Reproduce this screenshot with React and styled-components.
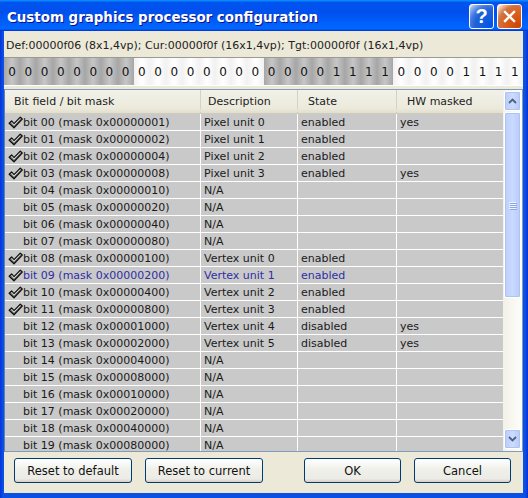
import React from 'react';
import styled, { createGlobalStyle } from 'styled-components';

const GlobalStyle = createGlobalStyle`
  html, body { margin: 0; padding: 0; background: #fff; }
  body { font-family: "DejaVu Sans", Tahoma, sans-serif; font-size: 11px; color: #111; }
`;

const Window = styled.div`
  width: 528px;
  height: 498px;
  display: flex;
  flex-direction: column;
  background: #0a45da;
`;

const TitleBar = styled.div`
  height: 31px;
  flex-shrink: 0;
  display: flex;
  align-items: center;
  padding: 1px 6px 0 7px;
  box-sizing: border-box;
  background: linear-gradient(180deg, #0997ff, #0053ee 8%, #0050ee 40%, #0066ff 88%, #0066ff 93%, #005bff 95%, #003dd7 96%, #003dd7);
`;

const Title = styled.div`
  flex: 1;
  padding-top: 2px;
  color: #fff;
  font-family: "DejaVu Sans", sans-serif;
  font-weight: bold;
  font-size: 13.4px;
  text-shadow: 1px 1px #0f1089;
`;

const TitleButton = styled.div`
  width: 25px;
  height: 25px;
  box-sizing: border-box;
  margin-left: 3px;
  border: 1px solid #fff;
  border-radius: 3px;
  display: flex;
  align-items: center;
  justify-content: center;
  color: #fff;
  font-family: "Liberation Sans", Arial, sans-serif;
  font-weight: bold;
  font-size: 20px;
  background: ${p => p.$close
    ? 'radial-gradient(circle at 90% 90%, #cc4600 0%, #dc6527 55%, #cd7546 70%, #ffccb2 90%, #fff 100%)'
    : 'radial-gradient(circle at 90% 90%, #0054e9 0%, #2263d5 55%, #4479e4 70%, #a3bbec 90%, #fff 100%)'};
`;

const Frame = styled.div`
  flex: 1;
  display: flex;
  padding: 0 5px 5px 4px;
  min-height: 0;
  background: linear-gradient(to right, #0831d9, #0b52e4 3px, #0b52e4 calc(100% - 3px), #0831d9);
`;

const Body = styled.div`
  flex: 1;
  display: flex;
  flex-direction: column;
  background: #ece9d8;
  min-width: 0;
`;

const InfoBar = styled.div`
  height: 26px;
  flex-shrink: 0;
  display: flex;
  align-items: center;
  padding: 2px 0 0 2px;
  box-sizing: border-box;
  color: #222;
  white-space: nowrap;
`;

const Strip = styled.div`
  display: grid;
  grid-template-columns: repeat(32, 1fr);
  height: 27px;
  flex-shrink: 0;
  border-top: 1px solid #9c9a90;
  border-bottom: 1px solid #fff;
  margin-bottom: 3px;
`;

const BitCell = styled.div`
  display: flex;
  align-items: center;
  justify-content: center;
  font-size: 12px;
  color: #111;
  background: ${p => p.$dark
    ? 'linear-gradient(to right, #a6a6a6, #c6c6c6 50%, #a6a6a6)'
    : 'linear-gradient(to right, #f1f1f1, #ffffff 50%, #f1f1f1)'};
`;

const List = styled.div`
  flex: 1;
  min-height: 0;
  display: flex;
  border: 1px solid #7f9db9;
  border-left-color: #5f7fb8;
  background: #fff;
`;

const ListMain = styled.div`
  flex: 1;
  min-width: 0;
  overflow: hidden;
  display: flex;
  flex-direction: column;
`;

const cols = '195px 96px 98px 1fr';

const Header = styled.div`
  display: grid;
  grid-template-columns: ${cols};
  column-gap: 1px;
  height: 24px;
  flex-shrink: 0;
  box-sizing: border-box;
  background: #d6d2c2;
  border-bottom: 2px solid #d0ccbc;
  box-shadow: inset 0 -3px #e2ded0;
`;

const HeaderCell = styled.div`
  background: linear-gradient(#f2f1ea, #ebeadb 80%, #e2ded0);
  padding-left: ${p => p.$pad}px;
  line-height: 23px;
  color: #222;
  white-space: nowrap;
`;

const Row = styled.div`
  display: grid;
  grid-template-columns: ${cols};
  column-gap: 1px;
  height: 16px;
  margin-bottom: 1px;
  flex-shrink: 0;
`;

const Cell = styled.div`
  display: flex;
  align-items: center;
  padding: 1px 0 0 3px;
  box-sizing: border-box;
  background: #c9c9c9;
  color: ${p => (p.$blue ? '#2e2ea6' : '#1a1a1a')};
  white-space: nowrap;
  overflow: hidden;
`;

const CheckSlot = styled.span`
  width: 15px;
  height: 15px;
  flex-shrink: 0;
  display: flex;
  align-items: center;
`;

const ScrollBar = styled.div`
  width: 19px;
  flex-shrink: 0;
  display: flex;
  flex-direction: column;
  padding: 1px 1px 2px 1px;
  box-sizing: border-box;
  background: linear-gradient(to right, #f3f1e8, #fdfdfa);
`;

const ScrollButton = styled.div`
  height: 20px;
  flex-shrink: 0;
  box-sizing: border-box;
  border: 1px solid #fff;
  border-radius: 2px;
  display: flex;
  align-items: center;
  justify-content: center;
  background: linear-gradient(to right, #b9cdfa, #cddbfd 50%, #b6cbf9);
  box-shadow: inset 0 0 0 1px #aec3f2;
`;

const Track = styled.div`
  flex: 1;
  padding-top: 1px;
`;

const Thumb = styled.div`
  height: 186px;
  box-sizing: border-box;
  border: 1px solid #fff;
  border-radius: 2px;
  display: flex;
  flex-direction: column;
  align-items: center;
  justify-content: center;
  gap: 1px;
  background: linear-gradient(to right, #bcd0fb, #cad9fd 50%, #b8cdfa);
  box-shadow: inset 0 0 0 1px #aec3f2;
`;

const Grip = styled.span`
  width: 7px;
  height: 1px;
  background: #eef3fe;
  box-shadow: 1px 1px #8ca7e4;
`;

const ButtonRow = styled.div`
  height: 41px;
  flex-shrink: 0;
  display: flex;
  align-items: flex-start;
  padding: 6px 12px 0 10px;
  box-sizing: border-box;
  gap: 13px;
`;

const Spacer = styled.div`
  flex: 1;
`;

const Button = styled.button`
  width: ${p => p.$w}px;
  height: 25px;
  border: 1px solid #003c74;
  border-radius: 3px;
  background: linear-gradient(180deg, #ffffff, #f0f0ea 45%, #ecebe6 86%, #d6d0c5);
  font-family: "DejaVu Sans", Tahoma, sans-serif;
  font-size: 11.5px;
  color: #111;
  padding: 0;
`;

const Check = () => (
  <svg width="15" height="13" viewBox="0 0 15 13">
    <path
      d="M1.2 7.2 L3.6 4.9 L6 7.6 L12.3 1.2 L14.2 3 L6 11.8 Z"
      fill="#8a8a8a"
      stroke="#111"
      strokeWidth="1.3"
      strokeLinejoin="round"
    />
    <path d="M3.6 6.2 L6 9 L12.4 2.4" fill="none" stroke="#e6e6e6" strokeWidth="0.8" />
  </svg>
);

const Chevron = ({ up }) => (
  <svg width="9" height="6" viewBox="0 0 9 6">
    <polyline
      points={up ? '1,5 4.5,1.5 8,5' : '1,1 4.5,4.5 8,1'}
      fill="none"
      stroke="#4d6185"
      strokeWidth="1.8"
    />
  </svg>
);

const bits = '00000000000000000000111100001111';

const describe = i => {
  if (i < 4) return { on: true, desc: `Pixel unit ${i}`, state: 'enabled', hw: i === 0 || i === 3 ? 'yes' : '' };
  if (i >= 8 && i < 12) return { on: true, desc: `Vertex unit ${i - 8}`, state: 'enabled', hw: '' };
  if (i === 12 || i === 13) return { on: false, desc: `Vertex unit ${i - 8}`, state: 'disabled', hw: 'yes' };
  return { on: false, desc: 'N/A', state: '', hw: '' };
};

const rows = Array.from({ length: 20 }, (_, i) => ({
  i,
  label: `bit ${String(i).padStart(2, '0')} (mask 0x${(1 << i).toString(16).padStart(8, '0')})`,
  ...describe(i),
}));

export default function App() {
  return (
    <>
      <GlobalStyle />
      <Window>
        <TitleBar>
          <Title>Custom graphics processor configuration</Title>
          <TitleButton>?</TitleButton>
          <TitleButton $close>
            <svg width="13" height="13" viewBox="0 0 13 13">
              <path d="M2 2 L11 11 M11 2 L2 11" stroke="#fff" strokeWidth="2.4" strokeLinecap="square" />
            </svg>
          </TitleButton>
        </TitleBar>
        <Frame>
          <Body>
            <InfoBar>Def:00000f06 (8x1,4vp); Cur:00000f0f (16x1,4vp); Tgt:00000f0f (16x1,4vp)</InfoBar>
            <Strip>
              {bits.split('').map((b, k) => (
                <BitCell key={k} $dark={Math.floor(k / 8) % 2 === 0}>{b}</BitCell>
              ))}
            </Strip>
            <List>
              <ListMain>
                <Header>
                  <HeaderCell $pad={9}>Bit field / bit mask</HeaderCell>
                  <HeaderCell $pad={7}>Description</HeaderCell>
                  <HeaderCell $pad={10}>State</HeaderCell>
                  <HeaderCell $pad={10}>HW masked</HeaderCell>
                </Header>
                {rows.map(r => (
                  <Row key={r.i}>
                    <Cell $blue={r.i === 9}>
                      <CheckSlot>{r.on && <Check />}</CheckSlot>
                      {r.label}
                    </Cell>
                    <Cell $blue={r.i === 9}>{r.desc}</Cell>
                    <Cell $blue={r.i === 9}>{r.state}</Cell>
                    <Cell>{r.hw}</Cell>
                  </Row>
                ))}
              </ListMain>
              <ScrollBar>
                <ScrollButton><Chevron up /></ScrollButton>
                <Track>
                  <Thumb>
                    <Grip /><Grip /><Grip /><Grip />
                  </Thumb>
                </Track>
                <ScrollButton><Chevron /></ScrollButton>
              </ScrollBar>
            </List>
            <ButtonRow>
              <Button $w={118}>Reset to default</Button>
              <Button $w={118}>Reset to current</Button>
              <Spacer />
              <Button $w={97}>OK</Button>
              <Button $w={97}>Cancel</Button>
            </ButtonRow>
          </Body>
        </Frame>
      </Window>
    </>
  );
}
